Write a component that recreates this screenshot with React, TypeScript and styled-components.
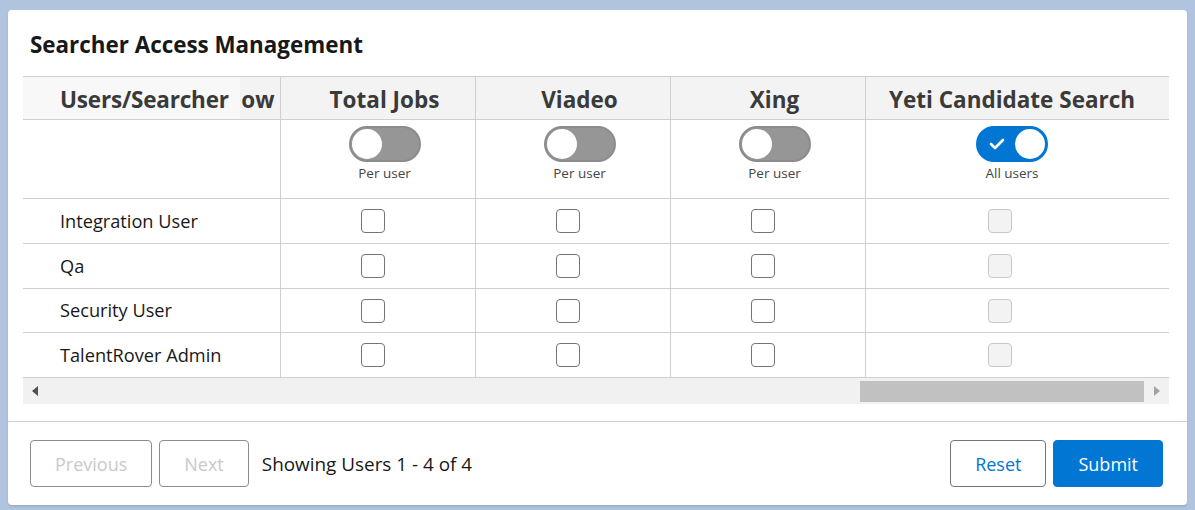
import React, { useLayoutEffect, useRef, useState } from "react";
import styled, { createGlobalStyle, css } from "styled-components";

const GlobalStyle = createGlobalStyle`
  * { box-sizing: border-box; }
  html, body { margin: 0; padding: 0; }
  body {
    background: #b0c4df;
    font-family: "Open Sans", "Noto Sans", Arial, sans-serif;
    color: #181818;
  }
`;

const Page = styled.div`
  width: 1195px;
  height: 510px;
  padding: 10px 8px 0 8px;
  overflow: hidden;
`;

const Card = styled.section`
  width: 1179px;
  height: 495px;
  background: #ffffff;
  border-radius: 4px;
  box-shadow: 0 2px 2px rgba(0, 0, 0, 0.1);
  display: flex;
  flex-direction: column;
`;

const Title = styled.h2`
  margin: 0;
  padding: 21px 22px 0 22px;
  height: 66px;
  font-size: 22.4px;
  font-weight: 700;
  line-height: 28px;
  color: #181818;
`;

const TableArea = styled.div`
  margin: 0 18px 0 15px;
  width: 1146px;
`;

const Scroller = styled.div`
  width: 100%;
  overflow-x: auto;
  overflow-y: hidden;
  scrollbar-width: none;
  &::-webkit-scrollbar { display: none; }
`;

const Table = styled.table`
  border-collapse: separate;
  border-spacing: 0;
  table-layout: fixed;
  border-top: 1px solid #cfcfcf;
`;

const HeadCell = styled.th<{ $sticky?: boolean; $filler?: boolean }>`
  height: 43px;
  padding: 3px 0 0 13px;
  background: #f3f3f3;
  border-bottom: 1px solid #cfcfcf;
  border-left: 1px solid #cfcfcf;
  font-size: 22.5px;
  font-weight: 700;
  color: #3a3a3a;
  text-align: center;
  white-space: nowrap;
  overflow: hidden;
  ${(p) =>
    p.$sticky &&
    css`
      position: sticky;
      left: 0;
      z-index: 2;
      background: #f8f8f8;
      border-left: none;
      text-align: left;
      padding-left: 37px;
      letter-spacing: -0.2px;
    `}
  ${(p) => p.$filler && css`border-left: none; padding: 0;`}
`;

const Cell = styled.td<{ $sticky?: boolean; $filler?: boolean; $tall?: boolean }>`
  height: ${(p) => (p.$tall ? "79px" : "44.75px")};
  padding: ${(p) => (p.$tall ? "6px 0 0 13px" : "0 11px 0 0")};
  vertical-align: ${(p) => (p.$tall ? "top" : "middle")};
  background: #ffffff;
  border-bottom: 1px solid #cfcfcf;
  border-left: 1px solid #cfcfcf;
  text-align: center;
  white-space: nowrap;
  ${(p) =>
    p.$sticky &&
    css`
      position: sticky;
      left: 0;
      z-index: 2;
      border-left: none;
      text-align: left;
      padding-left: 37px;
      font-size: 18.2px;
      color: #181818;
    `}
  ${(p) => p.$filler && css`border-left: none; padding: 0;`}
`;

const ToggleWrap = styled.div`
  display: flex;
  flex-direction: column;
  align-items: center;
  gap: 2px;
`;

const Track = styled.span<{ $on: boolean }>`
  position: relative;
  display: flex;
  align-items: center;
  width: 72px;
  height: 36px;
  border-radius: 18px;
  background: ${(p) => (p.$on ? "#0176d3" : "#969696")};
  border: 2px solid ${(p) => (p.$on ? "#0176d3" : "#8c8c8c")};
`;

const Knob = styled.span<{ $on: boolean }>`
  position: absolute;
  top: 1px;
  left: ${(p) => (p.$on ? "37px" : "1px")};
  width: 30px;
  height: 30px;
  border-radius: 50%;
  background: #ffffff;
`;

const Check = styled.svg`
  position: absolute;
  left: 11px;
  top: 9px;
`;

const ToggleLabel = styled.span`
  font-size: 13.5px;
  color: #444444;
  line-height: 18px;
`;

const Box = styled.span<{ $disabled?: boolean }>`
  display: inline-block;
  width: 24px;
  height: 24px;
  border-radius: 4px;
  border: 1px solid ${(p) => (p.$disabled ? "#c9c9c9" : "#747474")};
  background: ${(p) => (p.$disabled ? "#f3f3f3" : "#ffffff")};
  vertical-align: middle;
`;

const ScrollBar = styled.div`
  display: flex;
  align-items: center;
  height: 26px;
  background: #f1f1f1;
`;

const ArrowBtn = styled.div<{ $w: number }>`
  width: ${(p) => p.$w}px;
  height: 26px;
  display: flex;
  align-items: center;
  justify-content: center;
  flex: none;
`;

const ThumbTrack = styled.div`
  flex: 1;
  height: 21px;
  position: relative;
`;

const Thumb = styled.div`
  position: absolute;
  top: 0;
  height: 21px;
  background: #c1c1c1;
`;

const Footer = styled.footer`
  margin-top: 17px;
  border-top: 1px solid #cfcfcf;
  padding: 18px 24px 0 22px;
  display: flex;
  align-items: center;
`;

const Button = styled.button<{ $variant?: "brand" | "neutral" }>`
  height: 47px;
  padding: 0 24px;
  border-radius: 4px;
  font-family: inherit;
  font-size: 18px;
  background: #ffffff;
  border: 1px solid #8c8c8c;
  color: #c9c9c9;
  cursor: default;
  ${(p) =>
    p.$variant === "neutral" &&
    css`
      color: #0176d3;
      border-color: #747474;
    `}
  ${(p) =>
    p.$variant === "brand" &&
    css`
      background: #0176d3;
      border-color: #0176d3;
      color: #ffffff;
    `}
`;

const Pager = styled.div`
  display: flex;
  align-items: center;
  gap: 7px;
`;

const Status = styled.span`
  margin-left: 6px;
  font-size: 18.9px;
  color: #181818;
`;

const Actions = styled.div`
  margin-left: auto;
  display: flex;
  gap: 7px;
`;

type Searcher = { name: string; allUsers: boolean; width: number };

const names = [
  "Careerbuilder", "CV Library", "Dice", "Efinancial", "Github", "Glassdoor",
  "Indeed", "Jobs.ie", "Jobserve", "Jobsite", "LinkedIn", "Monster",
  "Monster UK", "Naukri", "Reed", "Seek", "Stack Overflow", "Total Jobs",
  "Viadeo", "Xing",
];

const searchers: Searcher[] = [
  ...names.map((n) => ({ name: n, allUsers: false, width: 195 })),
  { name: "Yeti Candidate Search", allUsers: true, width: 280 },
];

const users = ["Integration User", "Qa", "Security User", "TalentRover Admin"];

const Toggle: React.FC<{ on: boolean }> = ({ on }) => (
  <ToggleWrap>
    <Track $on={on}>
      {on && (
        <Check width="16" height="14" viewBox="0 0 16 14">
          <polyline points="2,7 6,11 14,3" fill="none" stroke="#fff" strokeWidth="2.6" strokeLinecap="round" strokeLinejoin="round" />
        </Check>
      )}
      <Knob $on={on} />
    </Track>
    <ToggleLabel>{on ? "All users" : "Per user"}</ToggleLabel>
  </ToggleWrap>
);

export default function App() {
  const ref = useRef<HTMLDivElement>(null);
  const [thumb, setThumb] = useState({ left: 0, width: 283 });
  const trackRef = useRef<HTMLDivElement>(null);

  useLayoutEffect(() => {
    const el = ref.current;
    const tr = trackRef.current;
    if (!el || !tr) return;
    el.scrollLeft = el.scrollWidth;
    const tw = tr.clientWidth;
    const w = Math.round((tw * el.clientWidth) / el.scrollWidth);
    const max = el.scrollWidth - el.clientWidth;
    const left = max > 0 ? Math.round(((tw - w) * el.scrollLeft) / max) : 0;
    setThumb({ left, width: w });
  }, []);

  const total = 217 + searchers.reduce((s, c) => s + c.width, 0) + 24;

  return (
    <Page>
      <GlobalStyle />
      <Card>
        <Title>Searcher Access Management</Title>
        <TableArea>
          <Scroller ref={ref}>
            <Table style={{ width: total }}>
              <colgroup>
                <col style={{ width: 217 }} />
                {searchers.map((s) => (
                  <col key={s.name} style={{ width: s.width }} />
                ))}
                <col style={{ width: 24 }} />
              </colgroup>
              <thead>
                <tr>
                  <HeadCell $sticky>Users/Searcher</HeadCell>
                  {searchers.map((s) => (
                    <HeadCell key={s.name}>{s.name}</HeadCell>
                  ))}
                  <HeadCell $filler />
                </tr>
              </thead>
              <tbody>
                <tr>
                  <Cell $sticky $tall />
                  {searchers.map((s) => (
                    <Cell key={s.name} $tall>
                      <Toggle on={s.allUsers} />
                    </Cell>
                  ))}
                  <Cell $filler $tall />
                </tr>
                {users.map((u) => (
                  <tr key={u}>
                    <Cell $sticky>{u}</Cell>
                    {searchers.map((s) => (
                      <Cell key={s.name}>
                        <Box $disabled={s.allUsers} />
                      </Cell>
                    ))}
                    <Cell $filler />
                  </tr>
                ))}
              </tbody>
            </Table>
          </Scroller>
          <ScrollBar>
            <ArrowBtn $w={24}>
              <svg width="6" height="10" viewBox="0 0 6 10">
                <polygon points="6,0 0,5 6,10" fill="#505050" />
              </svg>
            </ArrowBtn>
            <ThumbTrack ref={trackRef}>
              <Thumb style={{ left: thumb.left, width: thumb.width }} />
            </ThumbTrack>
            <ArrowBtn $w={25}>
              <svg width="6" height="10" viewBox="0 0 6 10">
                <polygon points="0,0 6,5 0,10" fill="#a3a3a3" />
              </svg>
            </ArrowBtn>
          </ScrollBar>
        </TableArea>
        <Footer>
          <Pager>
            <Button disabled>Previous</Button>
            <Button disabled>Next</Button>
            <Status>Showing Users 1 - 4 of 4</Status>
          </Pager>
          <Actions>
            <Button $variant="neutral">Reset</Button>
            <Button $variant="brand">Submit</Button>
          </Actions>
        </Footer>
      </Card>
    </Page>
  );
}
